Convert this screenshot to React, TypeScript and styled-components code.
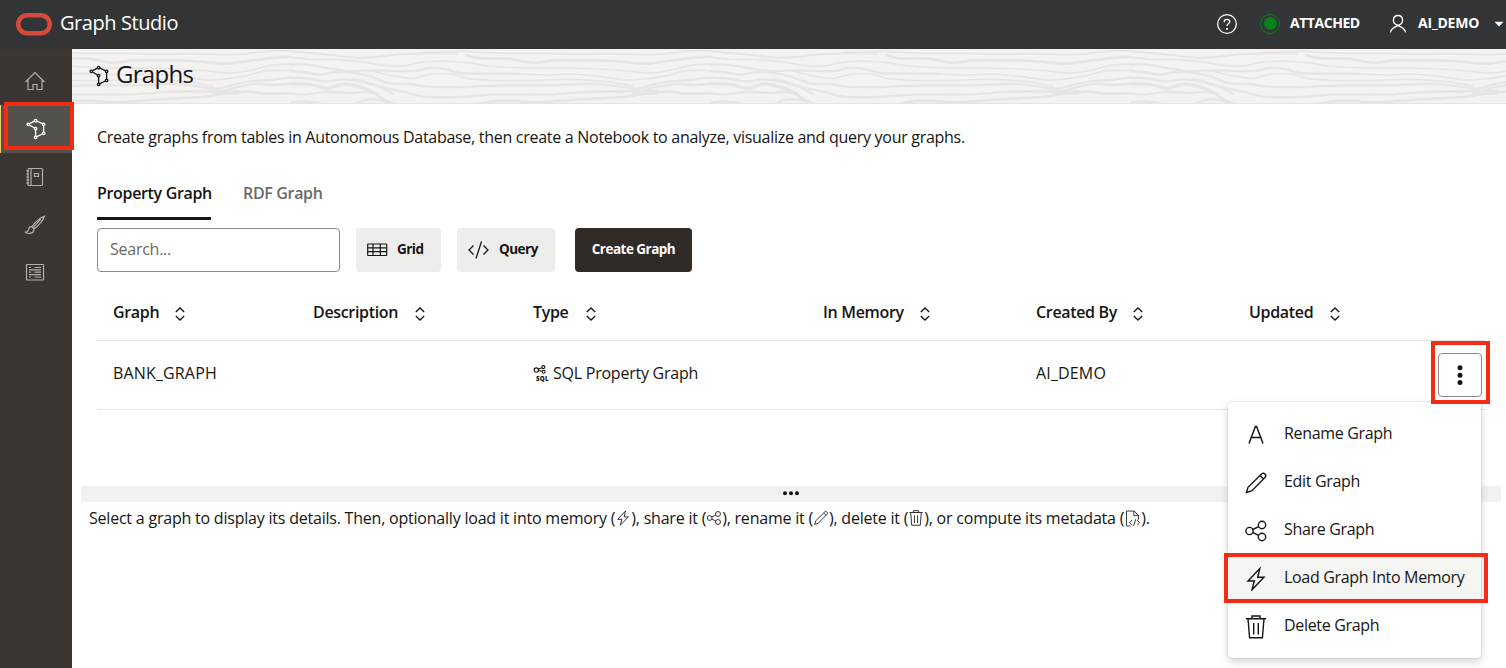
import React from "react";
import styled, { createGlobalStyle, css } from "styled-components";

const GlobalStyle = createGlobalStyle`
  *, *::before, *::after { box-sizing: border-box; }
  body {
    margin: 0;
    overflow: hidden;
    background: #fff;
    color: #161513;
    font-family: "Open Sans", "Noto Sans", sans-serif;
    font-size: 16px;
    letter-spacing: -0.33px;
  }
  svg { display: block; flex: none; }
`;

const Shell = styled.div`
  display: flex;
  flex-direction: column;
  width: 1506px;
  height: 668px;
  overflow: hidden;
`;

const Header = styled.header`
  display: flex;
  align-items: center;
  height: 49px;
  flex: none;
  padding: 0 2px 2px 16px;
  background: #323436;
  color: #fff;
`;

const ProductName = styled.div`
  margin-left: 8px;
  padding-bottom: 2px;
  font-size: 20px;
  line-height: 28px;
  letter-spacing: -0.43px;
`;

const HeaderTools = styled.div`
  display: flex;
  align-items: center;
  margin-left: auto;
`;

const HeaderLabel = styled.span<{ $width: number; $gap: number; $tracking: number }>`
  width: ${(p) => p.$width}px;
  margin-left: ${(p) => p.$gap}px;
  padding-bottom: 2px;
  font-size: 14px;
  font-weight: 700;
  line-height: 20px;
  letter-spacing: ${(p) => p.$tracking}px;
  white-space: nowrap;
`;

const StatusLight = styled.span`
  display: grid;
  place-items: center;
  width: 20px;
  height: 20px;
  margin-left: 22px;
  border: 1px solid #0b8018;
  border-radius: 50%;
  &::before {
    content: "";
    width: 13px;
    height: 13px;
    border-radius: 50%;
    background: #07821a;
  }
`;

const UserMenu = styled.div`
  display: flex;
  align-items: center;
  margin-left: 26px;
`;

const Body = styled.div`
  display: flex;
  flex: 1;
  min-height: 0;
`;

const Sidebar = styled.nav`
  width: 72px;
  flex: none;
  padding-top: 8px;
  background: #3b3632;
`;

const NavItem = styled.div<{ $active?: boolean }>`
  position: relative;
  display: flex;
  align-items: center;
  justify-content: center;
  height: 48px;
  padding-right: 2px;
  color: #b3afab;
  ${(p) =>
    p.$active &&
    css`
      padding-right: 0;
      background: #54504c;
      box-shadow: inset 1px 0 #f0cc71;
      color: #fff;
    `}
`;

const Callout = styled.div<{ $top: number; $left: number; $width: number; $height: number }>`
  position: absolute;
  z-index: 5;
  top: ${(p) => p.$top}px;
  left: ${(p) => p.$left}px;
  width: ${(p) => p.$width}px;
  height: ${(p) => p.$height}px;
  border: 4px solid #f32c15;
  pointer-events: none;
`;

const Main = styled.main`
  display: flex;
  flex-direction: column;
  flex: 1;
  min-width: 0;
`;

const Banner = styled.div`
  position: relative;
  display: flex;
  align-items: center;
  gap: 5px;
  height: 55px;
  padding: 0 0 4px 15px;
  border-bottom: 1px solid #e6e5e4;
  background: #f4f3f1;
`;

const BannerArt = styled.svg`
  position: absolute;
  inset: 0;
`;

const Title = styled.h1`
  position: relative;
  margin: 0;
  font-size: 24px;
  font-weight: 500;
  line-height: 32px;
  letter-spacing: -0.7px;
`;

const TitleIcon = styled.span`
  position: relative;
  padding-top: 4px;
`;

const Content = styled.section`
  padding: 0 21px 0 25px;
`;

const Intro = styled.p`
  margin: 21px 0 0;
  line-height: 24px;
  letter-spacing: -0.283px;
  white-space: nowrap;
`;

const Tabs = styled.div`
  display: flex;
  gap: 32px;
  height: 40px;
  margin-top: 31px;
`;

const Tab = styled.div<{ $selected?: boolean; $width: number }>`
  width: ${(p) => p.$width}px;
  padding-top: 1px;
  border-bottom: 3px solid ${(p) => (p.$selected ? "#161513" : "transparent")};
  color: ${(p) => (p.$selected ? "#161513" : "#6b6966")};
  font-weight: 600;
  line-height: 24px;
  white-space: nowrap;
`;

const Toolbar = styled.div`
  display: flex;
  height: 44px;
  margin-top: 8px;
`;

const SearchBox = styled.input`
  width: 243px;
  height: 44px;
  margin-right: 16px;
  padding: 0 12px 2px;
  border: 1px solid #8b8986;
  border-radius: 4px;
  outline: 0;
  background: #fff;
  font: inherit;
  letter-spacing: -0.25px;
  &::placeholder { color: #6b6966; opacity: 1; }
`;

const Button = styled.button<{ $width: number; $primary?: boolean; $gap?: number }>`
  display: flex;
  align-items: center;
  gap: ${(p) => p.$gap ?? 0}px;
  width: ${(p) => p.$width}px;
  height: 44px;
  margin-right: ${(p) => (p.$gap === 9 ? 20 : 16)}px;
  padding: 0 0 0 ${(p) => (p.$primary ? 0 : 11)}px;
  justify-content: ${(p) => (p.$primary ? "center" : "flex-start")};
  border: 0;
  border-radius: 4px;
  background: ${(p) => (p.$primary ? "#312b28" : "#ededeb")};
  color: ${(p) => (p.$primary ? "#fff" : "#161513")};
  font: inherit;
  font-size: 13.5px;
  font-weight: 700;
  letter-spacing: -0.52px;
  white-space: nowrap;
`;

const ButtonText = styled.span`
  padding-bottom: 3px;
`;

const gridColumns = "200px 220px 290px 213px 213px 1fr";

const TableHead = styled.div`
  display: grid;
  grid-template-columns: ${gridColumns};
  align-items: center;
  height: 69px;
  padding: 15px 0 0 16px;
  border-bottom: 1px solid #e4e3e2;
  font-weight: 600;
`;

const HeadCell = styled.div<{ $width: number }>`
  display: flex;
  align-items: center;
  line-height: 24px;
  span {
    width: ${(p) => p.$width}px;
    padding-bottom: 3px;
    white-space: nowrap;
  }
`;

const TableRow = styled.div`
  position: relative;
  display: grid;
  grid-template-columns: ${gridColumns};
  align-items: center;
  height: 69px;
  padding: 0 3px 4px 16px;
  border-bottom: 1px solid #e4e3e2;
  line-height: 24px;
`;

const NameCell = styled.div`
  letter-spacing: 0.15px;
`;

const TypeCell = styled.div`
  display: flex;
  align-items: center;
  gap: 4px;
  letter-spacing: -0.24px;
  white-space: nowrap;
`;

const KebabCell = styled.div`
  display: flex;
  justify-content: flex-end;
  padding-top: 4px;
`;

const KebabButton = styled.button`
  display: grid;
  place-items: center;
  width: 44px;
  height: 44px;
  padding: 0;
  border: 1px solid #8b8986;
  border-radius: 4px;
  background: #fff;
`;

const Splitter = styled.div`
  display: flex;
  align-items: flex-start;
  justify-content: center;
  height: 16px;
  margin: 76px 5px 0 9px;
  padding-top: 5px;
  background: #f1f1f1;
`;

const Hint = styled.p`
  display: flex;
  align-items: center;
  margin: 4px 0 0 17px;
  line-height: 24px;
  letter-spacing: -0.215px;
  white-space: pre;
`;

const Menu = styled.div`
  position: absolute;
  z-index: 4;
  top: 402px;
  left: 1228px;
  width: 253px;
  height: 256px;
  padding-top: 8px;
  border-radius: 4px;
  background: #fff;
  box-shadow: 0 4px 8px rgba(0, 0, 0, 0.17), 0 0 2px rgba(0, 0, 0, 0.18);
`;

const MenuItem = styled.div<{ $hover?: boolean }>`
  display: flex;
  align-items: center;
  gap: 16px;
  height: 48px;
  padding-left: 16px;
  background: ${(p) => (p.$hover ? "#f5f5f4" : "transparent")};
  line-height: 24px;
  white-space: nowrap;
  span { padding-bottom: 2px; }
  svg { margin-top: 1px; }
`;

type IconProps = { size?: number; stroke?: number };

const Icon = ({
  size = 24,
  stroke = 1.4,
  children,
}: IconProps & { children: React.ReactNode }) => (
  <svg
    width={size}
    height={size}
    viewBox="0 0 24 24"
    fill="none"
    stroke="currentColor"
    strokeWidth={stroke}
  >
    {children}
  </svg>
);

const HomeIcon = () => (
  <Icon stroke={1.2}>
    <path d="M2.500 13 12 3.500 21.500 13M5 11v9.500h5v-5h4v5h5V11" />
  </Icon>
);

const GraphIcon = ({ stroke = 1.3 }: IconProps) => (
  <Icon stroke={stroke}>
    <path d="M5.500 6.700 10.500 4.200M12.800 4.200 18.400 6.700M19.600 8.600v6.400M18.500 17 12.800 19.700M11.600 19V13M10.500 11 5.500 8" />
    <circle cx="4.300" cy="7.300" r="1.250" />
    <circle cx="11.600" cy="3.700" r="1.250" />
    <circle cx="19.600" cy="7.300" r="1.250" />
    <circle cx="19.600" cy="16.300" r="1.250" />
    <circle cx="11.600" cy="20.300" r="1.250" />
    <circle cx="11.600" cy="11.700" r="1.250" />
  </Icon>
);

const NotebookIcon = () => (
  <Icon stroke={1.2}>
    <rect x="5" y="3.500" width="14.500" height="17" rx="1" />
    <path d="M8 3.500v17M3.300 5.800H6M3.300 9H6M3.300 12H6M3.300 15H6M3.300 18.200H6M11.500 8.500h4v3h-4z" />
  </Icon>
);

const BrushIcon = () => (
  <Icon stroke={1.2}>
    <path d="M21.500 3C18 4.200 11.500 9.500 8.800 13.700L10.900 16C15.500 13 20.500 7 21.500 3ZM8.800 13.700C6.800 13.500 5.800 14.800 5.600 16.500 5.300 18.200 4 19 2.500 19.200 5 21.500 11.500 20.600 10.900 16M17.800 6.200 10 14.800" />
  </Icon>
);

const JobsIcon = () => (
  <Icon stroke={1.2}>
    <rect x="3.500" y="3.500" width="17" height="15.500" rx="0.500" />
    <path d="M6 6.500h2M11.500 6.500H18M6 11.200h2M11.500 11.200H18M6 16h2M11.500 16H18M6 8.900h12M6 13.600h12" />
  </Icon>
);

const HelpIcon = () => (
  <Icon size={22} stroke={1.4}>
    <circle cx="12" cy="12" r="10.200" />
    <path d="M9 10V9.300C9 6 15 6.200 15 9.500 15 11.900 12 11.700 12 14.200" />
    <path d="M12 16.300v2" strokeWidth="2" />
  </Icon>
);

const UserIcon = () => (
  <Icon stroke={1.3}>
    <path d="M12 13.300C5.300 11.800 6.500 3.500 12 3.500S18.700 11.800 12 13.300ZM4.500 20.500C4.700 16.300 8.300 16 12 13.300 15.700 16 19.300 16.300 19.500 20.500" />
  </Icon>
);

const GridIcon = () => (
  <svg width="22" height="22" viewBox="0 0 22 22" fill="none" stroke="currentColor" strokeWidth="1.200">
    <rect x="0.700" y="5" width="19" height="11.500" rx="0.500" />
    <path d="M.7 8.800h19M.7 12.700h19M6 5v11.500M13.300 5v11.500" />
  </svg>
);

const CodeIcon = () => (
  <svg width="22" height="20" viewBox="0 0 22 20" fill="none" stroke="currentColor" strokeWidth="1.300">
    <path d="M5.500 5.500 1 10 5.500 14.500M15.500 5.500 20 10 15.500 14.500M13.500 1.500 8 18.500" />
  </svg>
);

const SortIcon = () => (
  <svg width="12" height="16" viewBox="0 0 12 16" fill="none" stroke="currentColor" strokeWidth="1.300">
    <path d="M1.800 6 6 2 10.200 6M1.800 10 6 14 10.200 10" />
  </svg>
);

const LetterIcon = () => (
  <Icon stroke={1.500}>
    <path d="M5 20.500 11.400 3.500h1.200L19 20.500M7.300 14.500h9.400" />
  </Icon>
);

const PencilIcon = ({ size, stroke = 1.4 }: IconProps) => (
  <Icon size={size} stroke={stroke}>
    <path d="M2.500 21.500 4 16.300 17.500 3C19.800.8 23.200 4.200 21 6.500L7.700 20ZM16 4.500 19.500 8" />
  </Icon>
);

const ShareIcon = ({ size, stroke = 1.4 }: IconProps) => (
  <Icon size={size} stroke={stroke}>
    <circle cx="5.500" cy="12" r="3.600" />
    <circle cx="18" cy="6" r="3.700" />
    <circle cx="18" cy="18" r="3.700" />
    <path d="M8.800 10.500 14.700 7.600M8.800 13.600 14.700 16.400" />
  </Icon>
);

const BoltIcon = ({ size, stroke = 1.4 }: IconProps) => (
  <Icon size={size} stroke={stroke}>
    <path d="M15.800 1.500 4 14h6.300L8 22.800 20 10.300h-6.300Z" />
  </Icon>
);

const TrashIcon = ({ size, stroke = 1.4 }: IconProps) => (
  <Icon size={size} stroke={stroke}>
    <path d="M2 3.800h20M8 3.800V1h8v2.800M4 3.800l1.600 19h12.800L20 3.800M9.700 8v11.500M14.300 8v11.500" />
  </Icon>
);

const MetadataIcon = () => (
  <Icon size={17} stroke={1.2}>
    <path d="M9 22.500H3.500v-21h11L20.500 8v5.500M14 1.500V8h6.500M11.500 14 8 18l3.500 3.500M18.500 14l3.500 4-3.500 3.500M16.500 13 13.500 22.500" />
  </Icon>
);

const SqlIcon = () => (
  <svg width="16" height="18" viewBox="0 0 16 18" fill="none" stroke="currentColor" strokeWidth="1.150">
    <circle cx="3.300" cy="6" r="2.200" />
    <circle cx="10.300" cy="3.100" r="1.500" />
    <circle cx="10.600" cy="7.700" r="1.500" />
    <path d="M5.300 5.200 8.900 3.700M5.400 6.500 9.100 7.300" />
    <text
      x="3"
      y="17"
      fill="currentColor"
      stroke="none"
      fontFamily="Open Sans, sans-serif"
      fontSize="6.200"
      fontWeight="800"
      letterSpacing="0"
      textLength="12.500"
    >
      SQL
    </text>
  </svg>
);

type Point = [number, number];

/* Catmull-Rom interpolation keeps each grain line smooth across its samples. */
const smooth = (p: Point[]) =>
  p.slice(1).reduce((d, point, i) => {
    const before = p[Math.max(i - 1, 0)];
    const from = p[i];
    const after = p[Math.min(i + 2, p.length - 1)];
    return `${d}C${from[0] + (point[0] - before[0]) / 6} ${from[1] + (point[1] - before[1]) / 6} ${
      point[0] - (after[0] - from[0]) / 6
    } ${point[1] - (after[1] - from[1]) / 6} ${point[0]} ${point[1]}`;
  }, `M${p[0][0]} ${p[0][1]}`);

const grain: { w: number; p: Point[] }[] = [
  { w: 6, p: [[-10, 6], [50, 11], [130, 19], [200, 26], [260, 24], [330, 16], [420, 13], [500, 14]] },
  { w: 5, p: [[400, 10], [460, 9], [520, 7], [620, 12], [760, 13], [860, 15], [960, 14], [1090, 17], [1170, 9], [1220, 5], [1270, 7]] },
  { w: 5, p: [[-10, 22], [50, 30], [140, 32], [220, 39], [280, 49], [340, 51], [390, 41], [450, 36], [530, 41], [600, 51], [720, 57], [830, 57], [930, 60], [1010, 66], [1080, 72], [1150, 62], [1210, 48], [1270, 45]] },
  { w: 8, p: [[530, 19], [570, 28], [650, 29], [700, 37], [735, 42], [790, 34], [880, 34], [970, 36], [1060, 44], [1120, 38], [1190, 29], [1230, 25], [1270, 22]] },
  { w: 7, p: [[-10, 47], [50, 47], [120, 58], [180, 66], [270, 64], [340, 67], [385, 65], [415, 57], [470, 61], [510, 72], [620, 74], [690, 75]] },
  { w: 5, p: [[690, 75], [740, 77], [790, 78], [840, 75], [930, 82], [1010, 93], [1080, 88], [1130, 80], [1190, 65], [1270, 65]] },
  { w: 7, p: [[-10, 66], [40, 69], [90, 77], [130, 70], [190, 71], [245, 84], [300, 103], [360, 105], [410, 113], [520, 114], [640, 109], [780, 109], [900, 105], [970, 110], [1040, 119], [1090, 107], [1140, 97], [1200, 93], [1270, 84]] },
  { w: 5, p: [[255, 68], [310, 81], [370, 88], [420, 76], [490, 76], [530, 88], [610, 94], [740, 94], [840, 91], [950, 98], [1030, 112]] },
  { w: 7, p: [[-10, 86], [50, 88], [110, 97], [160, 91], [220, 99], [280, 116], [340, 128], [400, 143], [490, 145], [610, 137], [760, 137], [870, 130], [980, 126], [1040, 127]] },
  { w: 6, p: [[190, 90], [235, 100], [270, 115], [310, 135]] },
  { w: 10, p: [[-10, 104], [60, 106], [110, 118], [165, 105], [210, 114], [250, 130], [275, 148], [310, 165]] },
  { w: 7, p: [[-10, 132], [50, 136], [110, 129], [180, 132], [220, 129], [250, 132]] },
  { w: 8, p: [[570, 163], [640, 155], [740, 160], [840, 153], [910, 149], [1000, 144], [1060, 135], [1130, 128], [1190, 134], [1270, 132]] },
  { w: 14, p: [[1030, 129], [1060, 131], [1100, 130]] },
  { w: 7, p: [[1060, 125], [1110, 112], [1160, 105], [1210, 108], [1270, 104]] },
  { w: 7, p: [[-10, 162], [40, 157], [90, 162]] },
  { w: 7, p: [[200, 162], [230, 152], [270, 153], [300, 163]] },
  { w: 3, p: [[960, 126], [990, 132], [1020, 123]] },
];

const WoodGrain = () => (
  <BannerArt width="1434" height="54" aria-hidden="true">
    <defs>
      <pattern
        id="grain"
        width="1260"
        height="165"
        patternUnits="userSpaceOnUse"
        patternTransform="translate(218 0) scale(.33333)"
      >
        <g fill="none" stroke="#e6e5e3" strokeLinecap="round">
          {grain.map((line, i) => (
            <path key={i} d={smooth(line.p)} strokeWidth={line.w} />
          ))}
        </g>
      </pattern>
    </defs>
    <rect width="1434" height="54" fill="url(#grain)" />
  </BannerArt>
);

const columns = [
  { label: "Graph", width: 61 },
  { label: "Description", width: 101 },
  { label: "Type", width: 52 },
  { label: "In Memory", width: 96 },
  { label: "Created By", width: 96 },
  { label: "Updated", width: 80 },
];

const menuItems = [
  { label: "Rename Graph", icon: <LetterIcon /> },
  { label: "Edit Graph", icon: <PencilIcon /> },
  { label: "Share Graph", icon: <ShareIcon /> },
  { label: "Load Graph Into Memory", icon: <BoltIcon />, hover: true },
  { label: "Delete Graph", icon: <TrashIcon /> },
];

export default function App() {
  return (
    <Shell>
      <GlobalStyle />
      <Header>
        <svg width="36" height="24" viewBox="0 0 36 24" fill="none" stroke="#d84b3c" strokeWidth="4.500">
          <rect x="2.250" y="3.250" width="31.500" height="18" rx="9" />
        </svg>
        <ProductName>Graph Studio</ProductName>
        <HeaderTools>
          <HelpIcon />
          <StatusLight />
          <HeaderLabel $width={70} $gap={10} $tracking={-0.45}>ATTACHED</HeaderLabel>
          <UserMenu>
            <UserIcon />
            <HeaderLabel $width={76} $gap={8} $tracking={-0.2}>AI_DEMO</HeaderLabel>
            <svg width="10" height="6" viewBox="0 0 10 6">
              <path d="M.5.800h9L5 5.500Z" fill="#fff" />
            </svg>
          </UserMenu>
        </HeaderTools>
      </Header>
      <Body>
        <Sidebar>
          <NavItem><HomeIcon /></NavItem>
          <NavItem $active>
            <GraphIcon />
            <Callout $top={-3} $left={4} $width={70} $height={48} />
          </NavItem>
          <NavItem><NotebookIcon /></NavItem>
          <NavItem><BrushIcon /></NavItem>
          <NavItem><JobsIcon /></NavItem>
        </Sidebar>
        <Main>
          <Banner>
            <WoodGrain />
            <TitleIcon><GraphIcon /></TitleIcon>
            <Title>Graphs</Title>
          </Banner>
          <Content>
            <Intro>
              Create graphs from tables in Autonomous Database, then create a Notebook to analyze,
              visualize and query your graphs.
            </Intro>
            <Tabs>
              <Tab $selected $width={114}>Property Graph</Tab>
              <Tab $width={80}>RDF Graph</Tab>
            </Tabs>
            <Toolbar>
              <SearchBox placeholder="Search..." />
              <Button $width={85} $gap={8}><GridIcon /><ButtonText>Grid</ButtonText></Button>
              <Button $width={98} $gap={9}><CodeIcon /><ButtonText>Query</ButtonText></Button>
              <Button $width={117} $primary><ButtonText>Create Graph</ButtonText></Button>
            </Toolbar>
            <TableHead>
              {columns.map((column) => (
                <HeadCell key={column.label} $width={column.width}>
                  <span>{column.label}</span>
                  <SortIcon />
                </HeadCell>
              ))}
            </TableHead>
            <TableRow>
              <NameCell>BANK_GRAPH</NameCell>
              <div />
              <TypeCell><SqlIcon />SQL Property Graph</TypeCell>
              <div />
              <NameCell>AI_DEMO</NameCell>
              <KebabCell>
                <KebabButton aria-label="Graph actions">
                  <svg width="6" height="20" viewBox="0 0 6 20" fill="#161513">
                    <circle cx="3" cy="2.700" r="2.500" />
                    <circle cx="3" cy="10.200" r="2.500" />
                    <circle cx="3" cy="17.400" r="2.500" />
                  </svg>
                </KebabButton>
              </KebabCell>
              <Callout $top={0} $left={1334} $width={59} $height={63} />
            </TableRow>
          </Content>
          <Splitter>
            <svg width="16" height="5" viewBox="0 0 16 5" fill="#161513">
              <circle cx="2" cy="2.300" r="2" />
              <circle cx="8" cy="2.300" r="2" />
              <circle cx="14" cy="2.300" r="2" />
            </svg>
          </Splitter>
          <Hint>
            {"Select a graph to display its details. Then, optionally load it into memory ("}
            <BoltIcon size={16} stroke={1.3} />
            {"), share it ("}
            <ShareIcon size={16} stroke={1.3} />
            {"), rename it ("}
            <PencilIcon size={16} stroke={1.3} />
            {"), delete it ("}
            <TrashIcon size={16} stroke={1.3} />
            {"), or compute its metadata ("}
            <MetadataIcon />
            {")."}
          </Hint>
        </Main>
      </Body>
      <Menu>
        {menuItems.map((item) => (
          <MenuItem key={item.label} $hover={item.hover}>
            {item.icon}
            <span>{item.label}</span>
          </MenuItem>
        ))}
        <Callout $top={151} $left={-4} $width={264} $height={50} />
      </Menu>
    </Shell>
  );
}
